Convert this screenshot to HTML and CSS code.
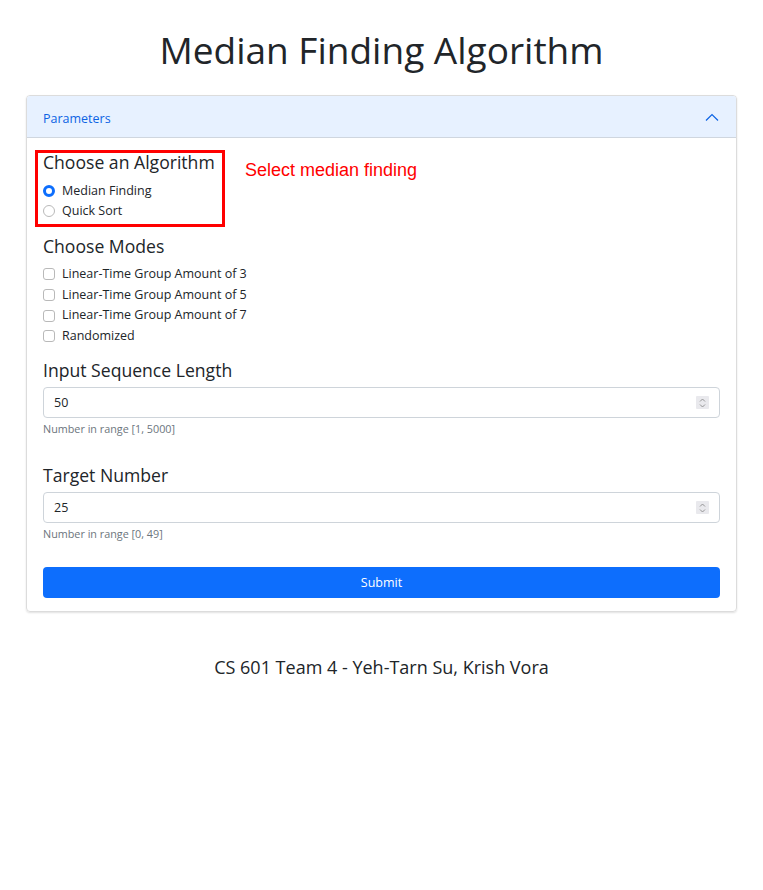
FILE: index.html
```html
<!DOCTYPE html>
<html lang="en">
<head>
<meta charset="utf-8">
<title>Median Finding Algorithm</title>
<link rel="stylesheet" href="styles.css">
</head>
<body>
<h1 class="title">Median Finding Algorithm</h1>
<section class="card">
  <div class="card-header">
    <span class="header-text">Parameters</span>
    <svg class="chevron" width="14" height="8" viewBox="0 0 14 8"><path d="M1 7.5 L7 1.5 L13 7.5" fill="none" stroke="#0c63e4" stroke-width="1.2"/></svg>
  </div>
  <div class="card-body">
    <div class="group algo">
      <h2 class="label">Choose an Algorithm</h2>
      <div class="options radios">
        <label class="option"><span class="radio checked"></span>Median Finding</label>
        <label class="option"><span class="radio"></span>Quick Sort</label>
      </div>
      <div class="annotation-box"></div>
      <div class="annotation-text">Select median finding</div>
    </div>
    <div class="group">
      <h2 class="label">Choose Modes</h2>
      <div class="options checks">
        <label class="option"><span class="check"></span>Linear-Time Group Amount of 3</label>
        <label class="option"><span class="check"></span>Linear-Time Group Amount of 5</label>
        <label class="option"><span class="check"></span>Linear-Time Group Amount of 7</label>
        <label class="option"><span class="check"></span>Randomized</label>
      </div>
    </div>
    <div class="group field">
      <h2 class="label">Input Sequence Length</h2>
      <div class="input"><span class="value">50</span><span class="spinner"><svg width="7" height="10" viewBox="0 0 7 10"><path d="M1 3.5 L3.5 1 L6 3.5 M1 6.5 L3.5 9 L6 6.5" fill="none" stroke="#8a8a8a" stroke-width="0.9"/></svg></span></div>
      <div class="help">Number in range [1, 5000]</div>
    </div>
    <div class="group field second">
      <h2 class="label">Target Number</h2>
      <div class="input"><span class="value">25</span><span class="spinner"><svg width="7" height="10" viewBox="0 0 7 10"><path d="M1 3.5 L3.5 1 L6 3.5 M1 6.5 L3.5 9 L6 6.5" fill="none" stroke="#8a8a8a" stroke-width="0.9"/></svg></span></div>
      <div class="help">Number in range [0, 49]</div>
    </div>
    <button class="submit" type="button">Submit</button>
  </div>
</section>
<footer class="footer">CS 601 Team 4 - Yeh-Tarn Su, Krish Vora</footer>
</body>
</html>
```
FILE: styles.css
```css
* { box-sizing: border-box; }
body {
  margin: 0;
  padding: 0 26px;
  font-family: "Open Sans", "Noto Sans", sans-serif;
  color: #212529;
  background: #fff;
}
.title {
  margin: 30px 0 0;
  font-size: 37px;
  font-weight: 400;
  line-height: 40px;
  text-align: center;
}
.card {
  margin-top: 25px;
  border: 1px solid #dcdcdc;
  border-radius: 4px;
  box-shadow: 0 1px 2px rgba(0,0,0,0.12);
  overflow: hidden;
}
.card-header {
  height: 42px;
  display: flex;
  align-items: center;
  justify-content: space-between;
  padding: 0 17px 0 16px;
  background: #e7f1ff;
  color: #0c63e4;
  font-size: 12.5px;
  border-bottom: 1px solid #cfd6df;
}
.header-text { padding-top: 3px; }
.card-body {
  padding: 12px 16px 13px;
}
.group { position: relative; }
.label {
  margin: 0;
  font-size: 17.6px;
  font-weight: 400;
  line-height: 24px;
}
.options { display: flex; flex-direction: column; }
.radios { margin-top: 7px; }
.checks { margin-top: 6px; }
.option {
  display: flex;
  align-items: center;
  font-size: 12.5px;
  line-height: 20px;
}
.checks .option { line-height: 20.7px; }
.radio, .check {
  width: 12px;
  height: 12px;
  margin-right: 7px;
  border: 1px solid #b9b9b9;
  background: #fff;
  flex: none;
}
.radio { border-radius: 50%; }
.radio.checked {
  border: 3.5px solid #0d6efd;
  background: #fff;
}
.check { border-radius: 3px; }
.group + .group { margin-top: 13px; }
.group.field { margin-top: 11px; }
.group.field.second { margin-top: 27px; }
.input {
  margin-top: 5px;
  height: 31px;
  display: flex;
  align-items: center;
  justify-content: space-between;
  padding: 1px 10px 0 10px;
  border: 1px solid #ced4da;
  border-radius: 4px;
  font-size: 12.5px;
}
.spinner {
  width: 13px;
  height: 13px;
  background: #e9e9ed;
  display: flex;
  align-items: center;
  justify-content: center;
  border-radius: 1px;
}
.help {
  margin-top: 4px;
  font-size: 10.8px;
  line-height: 14px;
  color: #6c757d;
}
.submit {
  display: block;
  width: 100%;
  height: 31px;
  margin-top: 26px;
  padding-top: 2px;
  border: 0;
  border-radius: 4px;
  background: #0d6efd;
  color: #fff;
  font-family: inherit;
  font-size: 12.5px;
}
.annotation-box {
  position: absolute;
  left: -8px;
  top: 0;
  width: 190px;
  height: 77px;
  border: 3px solid #ff0000;
}
.annotation-text {
  position: absolute;
  left: 202px;
  top: 9px;
  font-family: "Liberation Sans", Arial, sans-serif;
  font-size: 18px;
  line-height: 22px;
  color: #ff0000;
}
.footer {
  margin-top: 43px;
  text-align: center;
  font-size: 18px;
  line-height: 24px;
}
```
